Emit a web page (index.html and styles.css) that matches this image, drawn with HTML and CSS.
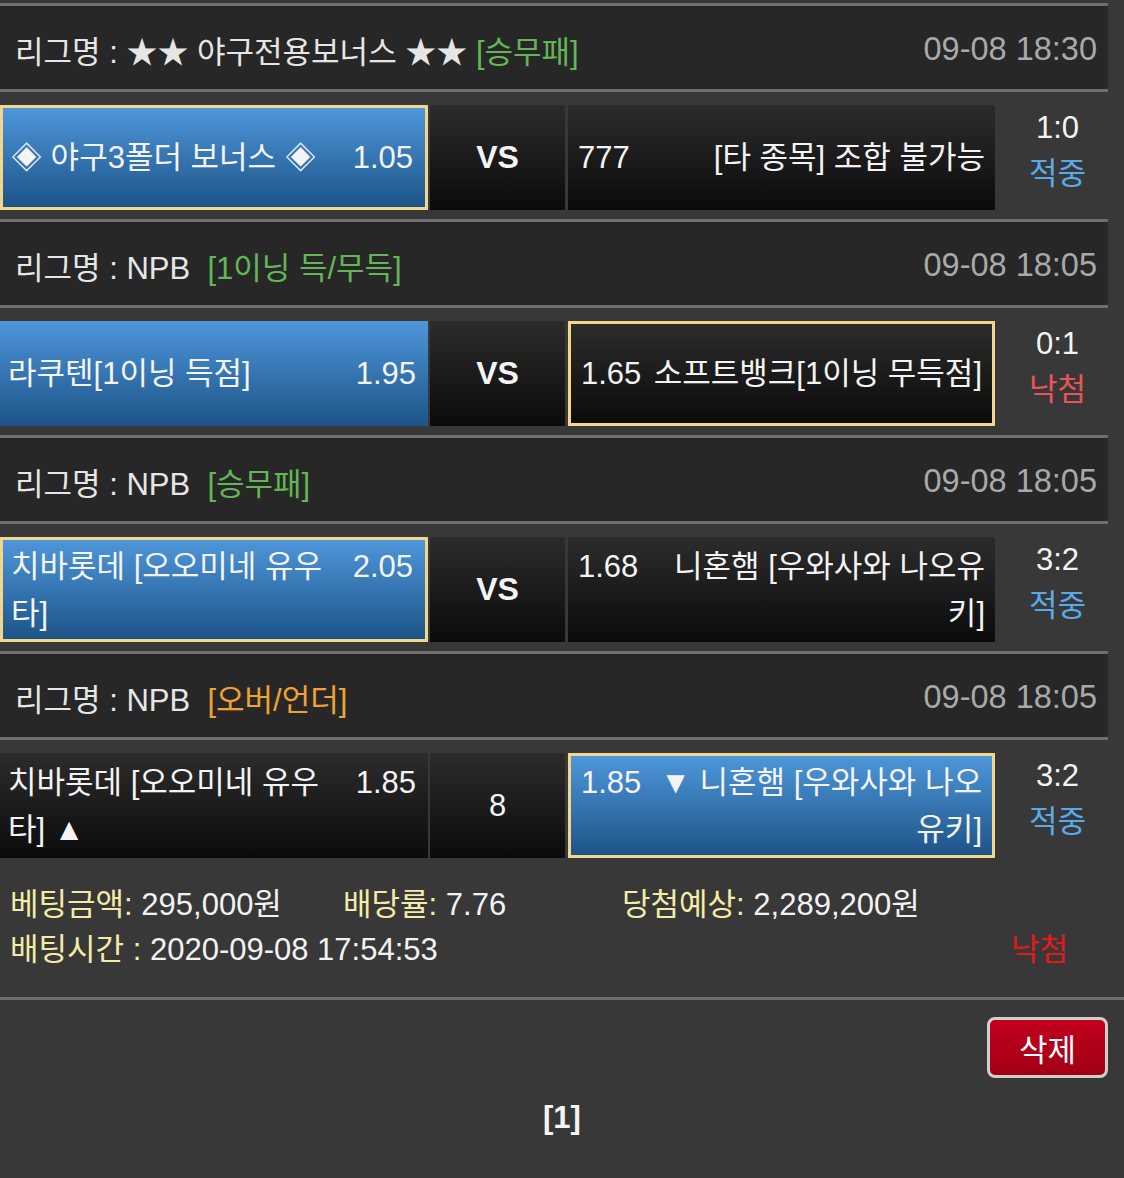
FILE: index.html
```html
<!DOCTYPE html>
<html lang="ko">
<head>
<meta charset="utf-8">
<title>베팅내역</title>
<link rel="stylesheet" href="styles.css">
</head>
<body>
<div class="wrap">
  <div class="match">
    <div class="hdr"><span class="league">리그명 : ★★ 야구전용보너스 ★★ <span class="green">[승무패]</span></span><span class="date">09-08 18:30</span></div>
    <div class="bet">
      <div class="cell l blue sel"><div class="in"><span class="odl">1.05</span>◈ 야구3폴더 보너스 ◈</div></div>
      <div class="cell vs">VS</div>
      <div class="cell r"><div class="in"><span class="odr">777</span>[타 종목] 조합 불가능</div></div>
      <div class="score"><span>1:0</span><span class="hit">적중</span></div>
    </div>
  </div>
  <div class="match">
    <div class="hdr"><span class="league">리그명 : NPB&nbsp; <span class="green">[1이닝 득/무득]</span></span><span class="date">09-08 18:05</span></div>
    <div class="bet">
      <div class="cell l blue"><div class="in"><span class="odl">1.95</span>라쿠텐[1이닝 득점]</div></div>
      <div class="cell vs">VS</div>
      <div class="cell r sel"><div class="in"><span class="odr">1.65</span>소프트뱅크[1이닝 무득점]</div></div>
      <div class="score"><span>0:1</span><span class="miss">낙첨</span></div>
    </div>
  </div>
  <div class="match">
    <div class="hdr"><span class="league">리그명 : NPB&nbsp; <span class="green">[승무패]</span></span><span class="date">09-08 18:05</span></div>
    <div class="bet">
      <div class="cell l blue sel"><div class="in"><span class="odl">2.05</span>치바롯데 [오오미네 유우타]</div></div>
      <div class="cell vs">VS</div>
      <div class="cell r"><div class="in"><span class="odr">1.68</span>니혼햄 [우와사와 나오유키]</div></div>
      <div class="score"><span>3:2</span><span class="hit">적중</span></div>
    </div>
  </div>
  <div class="match last">
    <div class="hdr"><span class="league">리그명 : NPB&nbsp; <span class="orange">[오버/언더]</span></span><span class="date">09-08 18:05</span></div>
    <div class="bet">
      <div class="cell l"><div class="in"><span class="odl">1.85</span>치바롯데 [오오미네 유우타] ▲</div></div>
      <div class="cell vs plain">8</div>
      <div class="cell r blue sel"><div class="in"><span class="odr">1.85</span>▼ 니혼햄 [우와사와 나오유키]</div></div>
      <div class="score"><span>3:2</span><span class="hit">적중</span></div>
    </div>
  </div>
  <div class="info">
    <div class="info-row">
      <span><span class="lbl">베팅금액:</span> 295,000원</span>
      <span><span class="lbl">배당률:</span> 7.76</span>
      <span><span class="lbl">당첨예상:</span> 2,289,200원</span>
    </div>
    <div class="info-row2">
      <span><span class="lbl">배팅시간 :</span> 2020-09-08 17:54:53</span>
      <span class="lost">낙첨</span>
    </div>
  </div>
  <div class="actions">
    <button class="del">삭제</button>
  </div>
  <div class="pager">[1]</div>
</div>
</body>
</html>
```

FILE: styles.css
```css
* { box-sizing: border-box; }
html, body { margin: 0; }
body {
  background: #383838;
  font-family: "Liberation Sans", "Noto Sans CJK KR", sans-serif;
  font-size: 31px;
  color: #f2f2f2;
  width: 1124px;
  min-height: 1178px;
}
.wrap { padding-top: 3px; }
.match { width: 1108px; }
.hdr {
  height: 89px;
  border-top: 3px solid #6f6f6f;
  border-bottom: 3px solid #6f6f6f;
  background: #272727;
  display: flex;
  align-items: center;
  justify-content: space-between;
  padding: 4px 11px 0 15px;
  color: #e6e6e6;
  white-space: nowrap;
}
.date { color: #a9a9a9; font-size: 32.5px; }
.green { color: #62b655; }
.orange { color: #f0a232; }
.bet {
  display: grid;
  grid-template-columns: 428px 140px 427px 113px;
  padding: 13px 0 9px;
}
.match.last .bet { padding-bottom: 0; }
.cell {
  height: 105px;
  display: flex;
  align-items: center;
  background: linear-gradient(#2c2c2c, #0b0b0b);
  line-height: 47px;
  color: #f4f4f4;
}
.cell.l { padding: 0 12px 0 8px; }
.cell.r { padding: 0 10px; }
.cell.blue { background: linear-gradient(#4e96da, #1d5488); }
.cell.sel { border: 3px solid #f2d68c; }
.in { width: 100%; }
.odl { float: right; }
.odr { float: left; margin-right: 6px; }
.cell.r .in { text-align: right; }
.cell.vs {
  margin: 0 3px 0 2px;
  justify-content: center;
  font-weight: bold;
  font-size: 32px;
}
.cell.vs.plain { font-weight: normal; font-size: 31px; }
.score {
  display: flex;
  flex-direction: column;
  align-items: center;
  line-height: 46px;
  padding-left: 12px;
  color: #f4f4f4;
}
.hit { color: #5aa9e8; }
.miss { color: #e9545a; }
.info {
  width: 1124px;
  padding: 24px 0 25px 10px;
  border-bottom: 3px solid #6f6f6f;
  line-height: 45px;
}
.lbl { color: #f3eca7; }
.info-row {
  display: grid;
  grid-template-columns: 333px 279px auto;
}
.info-row2 {
  display: flex;
  justify-content: space-between;
  padding-right: 56px;
}
.lost { color: #e21a1a; }
.actions {
  display: flex;
  justify-content: flex-end;
  padding: 17px 16px 0 0;
}
.del {
  width: 121px;
  height: 61px;
  border: 3px solid #cfcfcf;
  border-radius: 8px;
  background: linear-gradient(#c2001c, #a10016);
  color: #fff;
  font-family: "Liberation Sans", "Noto Sans CJK KR", sans-serif;
  font-size: 31px;
  padding: 0;
}
.pager {
  margin-top: 20px;
  text-align: center;
  font-weight: bold;
  line-height: 40px;
  color: #f4f4f4;
}
```
